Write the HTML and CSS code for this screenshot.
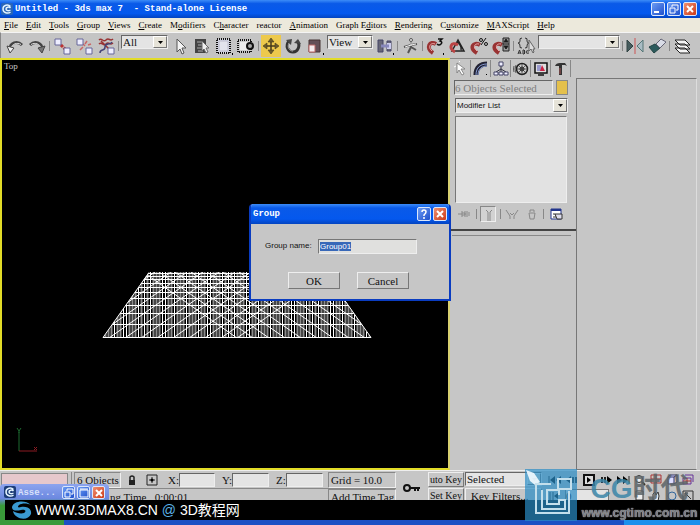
FILE: index.html
```html
<!DOCTYPE html>
<html lang="en">
<head>
<meta charset="utf-8">
<title>Untitled - 3ds max 7 - Stand-alone License</title>
<link rel="stylesheet" href="styles.css">
</head>
<body>
<header class="titlebar">
  <svg class="logo" viewBox="0 0 12 12"><rect width="12" height="12" rx="2" fill="#2a66b8"/><path d="M9.500 3.500C7 1 2 2 2 6s5 5 7.500 3M9.500 5C8 3.500 5 4 5 6s3 2 4.500 1" fill="none" stroke="#e4f4ff" stroke-width="1.500"/></svg>
  <h1>Untitled - 3ds max 7&nbsp; - Stand-alone License</h1>
  <button class="winbtn" aria-label="Minimize"><svg viewBox="0 0 12 12"><path d="M2 9h5" stroke="#fff" stroke-width="2"/></svg></button>
  <button class="winbtn" aria-label="Restore"><svg viewBox="0 0 12 12"><path d="M4 4V2h6v5H8M2 5h5v5H2z" fill="none" stroke="#fff"/></svg></button>
  <button class="winbtn close" aria-label="Close"><svg viewBox="0 0 12 12"><path d="M3 3l6 6M9 3l-6 6" stroke="#fff" stroke-width="2"/></svg></button>
</header>

<nav class="menubar">
  <a href="#"><u>F</u>ile</a><a href="#"><u>E</u>dit</a><a href="#"><u>T</u>ools</a><a href="#"><u>G</u>roup</a><a href="#"><u>V</u>iews</a><a href="#"><u>C</u>reate</a><a href="#">M<u>o</u>difiers</a><a href="#">C<u>h</u>aracter</a><a href="#">reactor</a><a href="#"><u>A</u>nimation</a><a href="#">Graph E<u>d</u>itors</a><a href="#"><u>R</u>endering</a><a href="#">C<u>u</u>stomize</a><a href="#"><u>M</u>AXScript</a><a href="#"><u>H</u>elp</a>
</nav>

<div class="toolbar">
  <button aria-label="Undo"><svg viewBox="0 0 20 20"><path d="M5 13C5 7 12 4 17 9" fill="none" stroke="#444" stroke-width="3"/><path d="M6 12C7 8 12 6 16 8.500" fill="none" stroke="#ddd"/><path d="M2 10l7 2-4 5z" fill="#eee" stroke="#444"/></svg></button>
  <button aria-label="Redo"><svg viewBox="0 0 20 20"><path d="M15 13C15 7 8 4 3 9" fill="none" stroke="#444" stroke-width="3"/><path d="M14 12C13 8 8 6 4 8.500" fill="none" stroke="#ddd"/><path d="M18 10l-7 2 4 5z" fill="#777" stroke="#444"/></svg></button>
  <i class="sep"></i>
  <button aria-label="Link"><svg viewBox="0 0 20 20"><path d="M6 6l9 9" stroke="#b33" stroke-width="3" stroke-dasharray="3 1"/><path d="M3 3h6v6H3zM12 12h6v6h-6z" fill="#eef" stroke="#669"/></svg></button>
  <button aria-label="Unlink"><svg viewBox="0 0 20 20"><path d="M9 8l2 2M13 5l-2 3M6 14l3-3M14 9l3-1" stroke="#c66" stroke-width="1.500"/><path d="M3 3h6v6H3zM12 12h6v6h-6z" fill="#eef" stroke="#669"/></svg></button>
  <button aria-label="Bind to space warp"><svg viewBox="0 0 20 20"><path d="M3 4c3-3 4 3 7 0s4 2 7-1M3 8c3-3 4 3 7 0s4 2 7-1M5 5l9 9" fill="none" stroke="#933" stroke-width="1.500"/><path d="M4 17c0-5 5-1 5-6s5-1 7-5" fill="none" stroke="#447" stroke-width="1.500"/><path d="M12 12h6v6h-6z" fill="#eef" stroke="#669"/></svg></button>
  <i class="sep"></i>
  <span class="combo filter"><select aria-label="Selection filter"><option>All</option></select></span>
  <button aria-label="Select"><svg viewBox="0 0 20 20"><path d="M7 3v13l3-3 2 5 2-1-2-5h4z" fill="#f4f4f4" stroke="#555"/></svg></button>
  <button aria-label="Select by name"><svg viewBox="0 0 20 20"><path d="M3 3h11v14H3z" fill="#444"/><path d="M5 6h6M6 9h5M5 12h6M6 15h5" stroke="#aaa"/><path d="M10 5v10l2-2 2 4 2-1-2-4h3z" fill="#eee" stroke="#666"/></svg></button>
  <button aria-label="Rectangular region"><svg viewBox="0 0 20 20"><path d="M3 3h13v14H3z" fill="#d6d8e4" stroke="#111" stroke-width="2" stroke-dasharray="1 1"/><path d="M5 5h9v10H5z" fill="#e2e3ec" stroke="#bbc"/><path d="M18 17h1v2h-1z"/></svg></button>
  <button aria-label="Window crossing"><svg viewBox="0 0 20 20"><path d="M2 4h13v12H2z" fill="#ccc" stroke="#111" stroke-width="2" stroke-dasharray="1 1"/><path d="M4 6h9v8H4z" fill="#eee"/><circle cx="14" cy="10" r="3" fill="#aaa" stroke="#111" stroke-width="2"/></svg></button>
  <i class="sep"></i>
  <button class="active" aria-label="Move"><svg viewBox="0 0 20 20"><path d="M10 4v12M4 10h12" stroke="#443a1c" stroke-width="1.500"/><path d="M10 2l3 4H7zM10 18l3-4H7zM2 10l4-3v6zM18 10l-4-3v6z" fill="#6c5c2c" stroke="#443a1c" stroke-width=".6"/></svg></button>
  <button aria-label="Rotate"><svg viewBox="0 0 20 20"><path d="M6 5C2 10 5 16 10 16s8-7 4-11" fill="none" stroke="#333" stroke-width="3"/><path d="M6 7C4 11 6 15 10 15" fill="none" stroke="#aaa"/><path d="M3 4l6-1-1 6zM11 7l4-4 3 5z" fill="#444"/></svg></button>
  <button aria-label="Scale"><svg viewBox="0 0 20 20"><path d="M4 4h11v12H4z" fill="#645058" stroke="#433"/><path d="M4 9h6v7H4z" fill="#f4ecee" stroke="#b66"/><path d="M18 17h1v2h-1z"/></svg></button>
  <span class="combo coord"><select aria-label="Reference coordinate system"><option>View</option></select></span>
  <button aria-label="Use pivot point"><svg viewBox="0 0 20 20"><path d="M3 4h5v12H3zM12 5h4v10h-4z" fill="#667" stroke="#446"/><path d="M12 7h4v6h-4z" fill="#cce"/><path d="M6 10h8" stroke="#88b" stroke-width="3"/><path d="M18 17h1v2h-1z"/></svg></button>
  <i class="sep"></i>
  <button aria-label="Manipulate"><svg viewBox="0 0 20 20"><path d="M11 5v6l-3 6M4 11l7-2 6-1M11 11l5 3" fill="none" stroke="#555" stroke-width="2"/><path d="M11 5v5M5 11l6-2 5-1" fill="none" stroke="#eee"/><circle cx="11" cy="4" r="1.500" fill="#eee" stroke="#555"/></svg></button>
  <i class="sep"></i>
  <button aria-label="Snap"><svg viewBox="0 0 20 20"><path d="M11 8C5 4 0 12 8 17" fill="none" stroke="#933" stroke-width="4"/><path d="M10 8C6 6 2 11 7 15" fill="none" stroke="#eaa"/><path d="M13 3h4l-2 2q3 1 1 3t-4 0" fill="none" stroke="#111" stroke-width="1.500"/><path d="M18 17h1v2h-1z"/></svg></button>
  <button aria-label="Angle snap"><svg viewBox="0 0 20 20"><path d="M5 15l6-11 6 11zM10 6q5 3 4 8" fill="none" stroke="#222" stroke-width="1.500"/><path d="M11 9C4 5 1 12 8 16" fill="none" stroke="#b44" stroke-width="3"/></svg></button>
  <button aria-label="Percent snap"><svg viewBox="0 0 20 20"><path d="M11 9C4 5 0 12 8 17" fill="none" stroke="#933" stroke-width="4"/><path d="M10 8C6 7 3 11 8 15" fill="none" stroke="#eaa"/><path d="M12 9l5-7" stroke="#111"/><circle cx="12" cy="4" r="1.500" fill="none" stroke="#111"/><circle cx="17" cy="8" r="1.500" fill="none" stroke="#111"/></svg></button>
  <button aria-label="Spinner snap"><svg viewBox="0 0 20 20"><path d="M11 9C4 5 0 12 8 17" fill="none" stroke="#933" stroke-width="4"/><path d="M10 8C6 7 3 11 8 15" fill="none" stroke="#eaa"/><path d="M12 2h6v13h-6z" fill="#999" stroke="#222"/><path d="M13 6l2-3 2 3zM13 10l2 3 2-3zM12 8h6" fill="#111" stroke="#222"/></svg></button>
  <i class="sep"></i>
  <button aria-label="Named selection sets"><svg viewBox="0 0 20 20"><path d="M6 2q-3 0-2 3 0 2-2 2 2 0 2 3-1 2 2 2M9 2q3 0 2 3 0 2 2 2-2 0-2 3 1 2-2 2M2 18l1.500-4L5 18M2.500 17h2M7 14v4h1q2-1 0-2 2-1 0-2zM13 15q-3-1-3 1t3 1" fill="none" stroke="#333"/><path d="M13 4v11l2-2 2 4 1-1-1-3h2z" fill="#ddd" stroke="#666"/></svg></button>
  <span class="combo sets"><select aria-label="Named selection"><option></option></select></span>
  <i class="sep"></i>
  <button aria-label="Mirror"><svg viewBox="0 0 20 20"><path d="M2 4l6 6-6 6z" fill="#465c5e" stroke="#344"/><path d="M18 4l-6 6 6 6z" fill="#a9bcc4" stroke="#577"/><path d="M10 2v16" stroke="#c55"/></svg></button>
  <button aria-label="Align"><svg viewBox="0 0 20 20"><path d="M2 11l6-3 5 4-6 5z" fill="#2c5a5c" stroke="#244"/><path d="M9 8l5-5 5 3-6 6z" fill="#d9dce6" stroke="#667"/></svg></button>
  <i class="sep"></i>
  <button aria-label="Layers"><svg viewBox="0 0 20 20"><path d="M3 12h10l5 5H8zM3 8h10l5 5H8zM3 4h10l5 5H8z" fill="#f4f4f4" stroke="#222"/></svg></button>
</div>

<main class="workspace">
  <section class="viewport">
    <span class="view-name">Top</span>
    <svg class="mesh" viewBox="0 0 270 67" id="mesh"></svg>
    <svg class="axis" viewBox="0 0 28 30"><path d="M5 6v19" stroke="#1d6b30"/><path d="M5 25h18" stroke="#8c1a22"/><path d="M3 2l2 3 2-3M5 5v2" fill="none" stroke="#1d6b30"/><path d="M20 21l3 3M23 21l-3 3" stroke="#8c1a22"/></svg>
  </section>

  <aside class="panel">
    <div class="tabs">
      <button aria-label="Create"><svg viewBox="0 0 16 16"><path d="M4 2l8 6-4 0 3 5-2 1-3-5-2 3z" fill="#fff" stroke="#777" stroke-width=".8"/><path d="M3 5l-2 1M6 1l1-1" stroke="#fff"/></svg></button>
      <button aria-label="Modify"><svg viewBox="0 0 16 16"><path d="M3 14C3 6 8 3 14 3" fill="none" stroke="#223" stroke-width="5"/><path d="M3 14C3 6 8 3 14 3M5 14C5 8 9 5 14 5" fill="none" stroke="#8aa0d8"/><path d="M13 13h1v1h-1z"/></svg></button>
      <button aria-label="Hierarchy"><svg viewBox="0 0 16 16"><path d="M8 5v3M8 8l-5 3M8 8v3M8 8l5 3" stroke="#334"/><path d="M6 1h4v4H6zM1 11h4v3H1zM6 11h4v3H6zM11 11h4v3h-4z" fill="#eef" stroke="#446"/></svg></button>
      <button aria-label="Motion"><svg viewBox="0 0 16 16"><circle cx="9" cy="8" r="5.500" fill="#ccc" stroke="#222" stroke-width="1.500"/><circle cx="9" cy="8" r="2" fill="#888" stroke="#222"/><path d="M9 3v10M4 8h10M5.500 4.500l7 7M12.500 4.500l-7 7" stroke="#333" stroke-width=".7"/><path d="M3 4q-2 4 0 8M1 5q-1 3 0 6" fill="none" stroke="#555"/></svg></button>
      <button aria-label="Display"><svg viewBox="0 0 16 16"><path d="M2 2h12v10H2z" fill="#ddd" stroke="#111" stroke-width="1.500"/><path d="M4 4h4v6H4z" fill="#99c"/><path d="M7 10l2-6 3 6z" fill="#c24"/><path d="M5 14h6" stroke="#111" stroke-width="1.500"/></svg></button>
      <button aria-label="Utilities"><svg viewBox="0 0 16 16"><path d="M2 5q1-3 5-3h5l2 3-2-1H9v10H6V5H4z" fill="#333"/><path d="M7 7v6" stroke="#a55"/></svg></button>
    </div>
    <div class="panel-cols">
      <div class="modify">
        <div class="name-row"><input class="obj-name" aria-label="Object name" value="6 Objects Selected"><button class="swatch" aria-label="Object colour"></button></div>
        <span class="combo modlist"><select aria-label="Modifier list"><option>Modifier List</option></select></span>
        <div class="stack"></div>
        <div class="stack-tools">
          <button aria-label="Pin stack"><svg viewBox="0 0 16 16"><path d="M2 8h4M6 5v6M6 7h3v2H6M9 5v6M11 5v6M13 6v4" fill="none" stroke="#888"/></svg></button>
          <i class="sep"></i>
          <button class="sunk" aria-label="Show end result"><svg viewBox="0 0 16 16"><path d="M5 3l2 2v9M11 3L9 5v9" fill="none" stroke="#888"/></svg></button>
          <i class="sep"></i>
          <button aria-label="Make unique"><svg viewBox="0 0 16 16"><path d="M2 4l4 6v3M14 4l-4 6v3M6 7l2 2 2-2" fill="none" stroke="#888"/></svg></button>
          <button aria-label="Remove modifier"><svg viewBox="0 0 16 16"><path d="M5 7h6l-1 6H6zM6 6V4h4v2" fill="none" stroke="#888"/></svg></button>
          <i class="sep"></i>
          <button aria-label="Configure"><svg viewBox="0 0 16 16"><path d="M3 3h10v10H3z" fill="#fff" stroke="#22358c"/><path d="M3 4h10" stroke="#22358c" stroke-width="2"/><path d="M7 8h7v5H9zM5 8h2M5 11h3" fill="#dde" stroke="#333"/></svg></button>
        </div>
        <div class="rollout"></div>
      </div>
      <div class="empty"></div>
    </div>
  </aside>
</main>

<footer class="status">
  <div class="listener"><div class="pink"></div><div class="white"></div></div>
  <div class="info">
    <div class="info-row">
      <span class="cell count">6 Objects</span>
      <button aria-label="Lock selection"><svg viewBox="0 0 12 12"><path d="M4 6V3q2-2 4 0v3" fill="none" stroke="#222" stroke-width="1.500"/><path d="M3 6h6v5H3z" fill="#222"/></svg></button>
      <button class="abs" aria-label="Absolute mode"><svg viewBox="0 0 12 12"><path d="M1 1h10v10H1z" fill="none" stroke="#222"/><path d="M6 3v6M3 6h6" stroke="#222"/><circle cx="6" cy="6" r="1.500"/></svg></button>
      <label>X:<input></label><label>Y:<input></label><label>Z:<input></label>
      <span class="cell grid-size">Grid = 10.0</span>
    </div>
    <div class="info-row second">
      <span class="prompt">ng Time&nbsp;&nbsp; 0:00:01</span>
      <span class="cell grid-size">Add Time Tag</span>
    </div>
  </div>
  <button class="key" aria-label="Set keys"><svg viewBox="0 0 20 12"><circle cx="5" cy="6" r="3" fill="none" stroke="#111" stroke-width="2"/><path d="M8 6h10M13 6v3M16 6v3" stroke="#111" stroke-width="2"/></svg></button>
  <div class="keys">
    <button class="txt">uto Key</button>
    <span class="combo keyset"><select aria-label="Key set"><option>Selected</option></select></span>
    <button class="txt">Set Key</button>
    <button class="txt wide">Key Filters...</button>
  </div>
  <div class="play">
    <div class="play-row">
      <button aria-label="Go to start"><svg viewBox="0 0 14 12"><path d="M1 2v8M7 2v8L2 6zM13 2v8L8 6z"/><path d="M1 2v8" stroke="#222"/></svg></button>
      <button aria-label="Previous frame"><svg viewBox="0 0 14 12"><path d="M6 2v8L1 6z"/><path d="M8 3v6M11 3v6" stroke="#222" stroke-width="2"/></svg></button>
      <button aria-label="Play"><svg viewBox="0 0 14 12"><path d="M2 1h10v10H2z" fill="#ddd" stroke="#111" stroke-width="2"/><path d="M5 3v6l4-3z"/></svg></button>
      <button aria-label="Next frame"><svg viewBox="0 0 14 12"><path d="M8 2v8l5-4z"/><path d="M3 3v6M6 3v6" stroke="#222" stroke-width="2"/></svg></button>
      <button aria-label="Go to end"><svg viewBox="0 0 14 12"><path d="M1 2v8l5-4zM7 2v8l5-4z"/><path d="M13 2v8" stroke="#222"/></svg></button>
    </div>
    <div class="play-row">
      <button aria-label="Key mode"><svg viewBox="0 0 14 12"><path d="M2 2v8M5 2v8" stroke="#222"/><path d="M6 6l4-3v6z"/></svg></button>
      <input class="frame" aria-label="Frame" value="0">
    </div>
  </div>
  <div class="nav">
    <button aria-label="Zoom"><svg viewBox="0 0 12 12"><circle cx="5" cy="5" r="3.500" fill="#eee" stroke="#333"/><path d="M8 8l3 3" stroke="#333" stroke-width="2"/></svg></button>
    <button aria-label="Zoom all"><svg viewBox="0 0 12 12"><path d="M1 1h10v8H1zM6 1v8M1 5h10" fill="none" stroke="#a33"/></svg></button>
    <button aria-label="Zoom extents"><svg viewBox="0 0 12 12"><path d="M2 3h6v7H2zM2 3l2-2h7L8 3M11 1v7l-3 2" fill="#ddf" stroke="#336"/></svg></button>
    <button aria-label="Zoom extents all"><svg viewBox="0 0 12 12"><path d="M1 4h8v6H1zM3 1h8v7" fill="none" stroke="#639"/><path d="M5 4v6M1 7h8" stroke="#a33"/></svg></button>
    <button aria-label="Region zoom"><svg viewBox="0 0 12 12"><path d="M2 1h7v9H2z" fill="#eee" stroke="#333"/></svg></button>
    <button aria-label="Pan"><svg viewBox="0 0 12 12"><path d="M3 10V4l2-2 1 3 2-3 1 4-1 5z" fill="#eee" stroke="#333"/></svg></button>
    <button aria-label="Arc rotate"><svg viewBox="0 0 12 12"><circle cx="6" cy="6" r="4" fill="none" stroke="#369"/></svg></button>
    <button aria-label="Maximize viewport"><svg viewBox="0 0 12 12"><path d="M1 1h10v10H1zM3 3l6 6M3 6V3h3" fill="none" stroke="#333"/></svg></button>
  </div>
</footer>
<div class="taskbar"><div class="start"></div><div class="task"></div><div class="tray"></div></div>

<form class="dialog">
  <div class="dialog-title"><h2>Group</h2>
    <button type="button" class="winbtn" aria-label="Help"><svg viewBox="0 0 12 12"><path d="M4 4q0-2 2-2t2 2q0 1-2 3v1M6 9v2" fill="none" stroke="#fff" stroke-width="1.500"/></svg></button>
    <button type="button" class="winbtn close" aria-label="Close"><svg viewBox="0 0 12 12"><path d="M3 3l6 6M9 3l-6 6" stroke="#fff" stroke-width="2"/></svg></button>
  </div>
  <div class="dialog-body">
    <div class="field"><label for="gname">Group name:</label><input id="gname" value="Group01"></div>
    <div class="actions"><button type="button">OK</button><button type="button">Cancel</button></div>
  </div>
</form>

<div class="mini">
  <svg class="logo" viewBox="0 0 12 12"><rect width="12" height="12" rx="2" fill="#1c3c78"/><path d="M9.500 3.500C7 1 2 2 2 6s5 5 7.500 3M9.500 5C8 3.500 5 4 5 6s3 2 4.500 1" fill="none" stroke="#e4f4ff" stroke-width="1.500"/></svg>
  <b>Asse...</b>
  <button class="winbtn" aria-label="Restore"><svg viewBox="0 0 12 12"><path d="M4 4V2h6v5H8M2 5h5v5H2z" fill="none" stroke="#fff"/></svg></button>
  <button class="winbtn" aria-label="Maximize"><svg viewBox="0 0 12 12"><path d="M2 3h8v7H2zM2 2h8" fill="none" stroke="#fff"/></svg></button>
  <button class="winbtn close" aria-label="Close"><svg viewBox="0 0 12 12"><path d="M3 3l6 6M9 3l-6 6" stroke="#fff" stroke-width="2"/></svg></button>
</div>

<div class="banner">
  <svg viewBox="0 0 22 20"><path d="M20 5C14-1 2 1 1 7c0 4 4 4 9 3 4-1 6 1 3 3-3 1-8 0-11-2 1 8 15 11 18 3 1-6-5-8-10-7-3 1-4 0-2-2 3-2 8-2 12 0z" fill="#3a9ad2"/></svg>
  <span>WWW.3DMAX8.CN <em>@</em> 3D教程网</span>
</div>

<div class="stamp">
  <svg viewBox="0 0 52 52"><path d="M0 0h52v52H0z" fill="#2a8cc4" fill-opacity=".7"/><path d="M1 1l8 3 6 9-5 3-5-4z" fill="#f4fbff" fill-opacity=".9"/><path d="M26 15H11v29h33V22M33 10h13v10H33zM34 26v-5H22v14h12v-4h6v9H17V21" fill="none" stroke="#c4dfec" stroke-width="2"/></svg>
  <div><strong><span>CG</span>时代</strong><small>www.cgtimo.com.cn</small></div>
</div>

<script>
// wireframe plane: rows get closer together towards the far edge
var rows = [65, 52, 41, 33, 26, 20, 15, 11, 7, 4, 1];
var mid = 135;
function line(x1, y1, x2, y2, c) {
  return '<path class="' + c + '" d="M' + x1 + ' ' + y1 + 'L' + x2 + ' ' + y2 + '"/>';
}
var out = '<clipPath id="plane"><path d="M47 0H223L269 66H1z"/></clipPath><g clip-path="url(#plane)">';
for (var x = 0; x < 270; x += 3) {
  out += line(x + .5, 0, x + .5, 66, x % 4 == 0 || x % 7 == 0 ? 'bright' : 'dim');
}
for (var i = 0; i < rows.length; i++) {
  out += line(0, rows[i] + .5, 270, rows[i] + .5, 'bright');
}
// slanted edges, mirrored round the middle
for (var d = 0; d < 230; d += 16) {
  out += line(mid - d + 94, 0, mid - d, 66, 'slant left');
  out += line(mid + d - 94, 0, mid + d, 66, 'slant right');
}
out += '</g><path class="bright" d="M47 .5L1 65.500H269L223 .5"/>';
document.getElementById('mesh').innerHTML = out;
document.getElementById('gname').select();
</script>
</body>
</html>
```
FILE: styles.css
```css
*{box-sizing:border-box;}
body{
margin:0;
height:100vh;
display:flex;
flex-direction:column;
overflow:hidden;
background:#c6c6c6;
color:#111;
font:11px/12px "Liberation Serif","Noto Sans CJK SC",serif;
}
button,input,select{
font:inherit;
color:inherit;
margin:0;
padding:0;
border:0;
border-radius:0;
outline:0;
background:none;
min-width:0;
}
svg{display:block;}
h1,h2{
margin:0;
flex:1;
color:#fff;
font:bold 9px/16px "Liberation Mono",monospace;
}
/* title bar */
.titlebar{
height:18px;
display:flex;
align-items:center;
gap:2px;
padding:0 3px 0 1px;
background:linear-gradient(#3c8cf8,#0a5ae8 20%,#0458ee 75%,#0344c0);
}
.logo{width:12px;height:12px;}
.winbtn{
width:14px;
height:14px;
display:grid;
place-items:center;
border:1px solid #dbe7fb;
border-radius:2px;
background:linear-gradient(135deg,#6c9cf4,#1f50cc);
}
.winbtn svg{width:12px;height:12px;}
.winbtn.close{background:linear-gradient(135deg,#f09070,#cc3a18);}
/* menus */
.menubar{
height:14px;
display:flex;
gap:8px;
padding:0 4px;
background:#ece9dc;
font-size:9px;
line-height:14px;
}
.menubar a{
color:#000;
text-decoration:none;
white-space:nowrap;
}
/* main toolbar */
.toolbar{
height:26px;
display:flex;
align-items:center;
gap:2px;
padding:0 4px;
border-left:1px solid #888;
border-top:1px solid #f4f4f4;
background:#c4c4c4;
}
.toolbar button{
width:20px;
height:22px;
display:grid;
place-items:center;
flex:none;
}
.toolbar svg{width:20px;height:20px;}
.toolbar .active{background:#edc94c;}
.sep{
width:1px;
height:10px;
background:#888;
flex:none;
}
.combo{
display:flex;
height:14px;
border:1px solid #666;
border-right-color:#eee;
border-bottom-color:#eee;
background:#e4e4e4;
}
.combo select{
flex:1;
appearance:none;
padding-left:1px;
line-height:12px;
}
.combo::after{
content:"";
width:12px;
border:1px solid #fff;
border-right-color:#777;
border-bottom-color:#777;
background:#e6e3d8 url("data:image/svg+xml,%3Csvg xmlns='http://www.w3.org/2000/svg' width='5' height='3'%3E%3Cpath d='M0 0h5L2.500 3z'/%3E%3C/svg%3E") center no-repeat;
}
.toolbar .combo{align-self:flex-start;margin-top:2px;}
.filter{width:47px;}
.coord{width:46px;}
.sets{width:82px;}
/* viewport and command panel */
.workspace{
flex:1;
min-height:0;
display:flex;
}
.viewport{
flex:1;
position:relative;
border:2px solid #e2dc28;
border-right-color:#d8d070;
background:#000;
}
.view-name{
display:block;
padding:0 2px;
color:#c8c8c8;
font-size:9px;
}
.mesh{
position:absolute;
left:100px;
top:212px;
width:270px;
height:67px;
}
.mesh path{fill:none;stroke:#fff;}
.mesh .dim{stroke:#8c8c8c;stroke-width:2;}
.axis{
position:absolute;
left:12px;
bottom:12px;
width:28px;
height:30px;
}
.panel{
width:250px;
display:flex;
flex-direction:column;
border-top:1px solid #888;
}
.tabs{
height:19px;
display:flex;
padding:1px 0 1px 1px;
}
.tabs button{
width:20px;
display:grid;
place-items:center;
border-right:1px solid #888;
}
.tabs svg{width:16px;height:16px;}
.panel-cols{
flex:1;
display:flex;
}
.modify{
width:126px;
display:flex;
flex-direction:column;
padding-top:2px;
}
.name-row{
display:flex;
gap:3px;
padding:0 8px 0 4px;
height:15px;
}
.obj-name{
flex:1;
border:1px solid #666;
border-right-color:#eee;
border-bottom-color:#eee;
color:#808080;
background:#cecece;
}
.swatch{
width:12px;
border:1px solid #888;
background:#e4c04c;
}
.modlist{
height:15px;
margin:3px 8px 3px 5px;
font:8px/12px "Liberation Sans",sans-serif;
}
.stack{
height:87px;
margin:0 9px 0 5px;
border:1px solid #777;
border-right-color:#eee;
border-bottom-color:#eee;
background:#e2e2e2;
}
.stack-tools{
display:flex;
align-items:center;
justify-content:space-between;
height:26px;
padding:0 12px 4px 6px;
}
.stack-tools button{width:16px;height:16px;}
.stack-tools svg{width:16px;height:16px;}
.stack-tools .sunk{border:1px solid #888;border-right-color:#eee;border-bottom-color:#eee;background:#d2d2d2;}
.rollout{
flex:1;
border-top:2px solid #444;
}
.rollout::before{
content:"";
display:block;
margin:4px 5px 0 2px;
border-top:1px solid #888;
}
.empty{
flex:1;
margin-right:3px;
border:1px solid #777;
border-right-color:#ddd;
}
/* status area */
.status{
height:50px;
display:flex;
padding-top:1px;
border-top:1px solid #eee;
}
.listener{
width:72px;
padding:1px 3px 0 1px;
border-right:1px solid #888;
}
.pink{height:18px;border:1px solid #888;background:#e6c8cc;}
.white{height:18px;background:#eee;}
.info{width:324px;padding-left:2px;}
.info-row{
display:flex;
align-items:center;
height:16px;
white-space:nowrap;
}
.info-row.second{
border-top:1px solid #888;
height:17px;
}
.info-row button{width:12px;height:12px;margin-left:5px;}
.info-row .abs{margin:0 4px 0 8px;}
.cell{
padding:1px 2px;
border:1px solid #888;
border-right-color:#eee;
border-bottom-color:#eee;
}
.count{width:47px;}
.grid-size{width:68px;margin-left:auto;}
.prompt{padding-left:36px;}
.info-row label{
display:flex;
align-items:center;
padding-left:6px;
width:54px;
}
.info-row input{
flex:1;
margin-right:1px;
height:14px;
border:1px solid #666;
border-right-color:#eee;
border-bottom-color:#eee;
background:#e4e4e4;
}
.key{width:32px;padding:10px 6px;}
.key svg{width:20px;height:12px;}
.status .key{align-self:flex-start;}
.keys{
width:114px;
display:grid;
grid-template-columns:36px 1fr;
grid-auto-rows:15px;
gap:1px;
align-content:start;
}
.txt{
white-space:nowrap;
font-size:10px;
border:1px solid #eee;
border-right-color:#777;
border-bottom-color:#777;
}
.wide{
padding-left:5px;
font-size:11px;
text-align:left;
}
.play{
flex:1;
padding-left:6px;
}
.play-row{display:flex;gap:3px;height:16px;align-items:center;}
.play-row button,.play-row svg{width:14px;height:12px;}
.frame{width:44px;height:14px;border:1px solid #777;background:#e4e4e4;}
.nav{
width:66px;
display:grid;
grid-template-columns:repeat(4,16px);
grid-auto-rows:16px;
align-content:start;
align-items:center;
}
.nav svg{width:12px;height:12px;}
.taskbar{
height:5px;
display:flex;
background:#2058d0;
}
.start{width:64px;background:#3a9a3a;}
.task{flex:1;background:#1c50c4;}
.tray{width:76px;background:#1c90ec;}
/* group dialog */
.dialog{
position:absolute;
left:249px;
top:204px;
width:202px;
border:2px solid #0a3cc0;
border-top:0;
border-radius:4px 4px 0 0;
overflow:hidden;
background:#c6c6c6;
}
.dialog-title{
display:flex;
align-items:center;
gap:2px;
height:20px;
padding:0 2px;
background:linear-gradient(#3c8cf8,#0a5ae8 20%,#0458ee 75%,#0344c0);
}
.dialog-body{padding:15px 14px 10px;}
.field{
display:flex;
gap:6px;
font:8px/14px "Liberation Sans",sans-serif;
}
.field label{width:47px;white-space:nowrap;}
.field input{
width:99px;
height:15px;
padding-left:1px;
border:1px solid #777;
border-right-color:#eee;
border-bottom-color:#eee;
background:#e0e0de;
}
.field input::selection{background:#3868b8;color:#fff;}
.actions{
display:flex;
gap:17px;
padding:18px 0 0 23px;
}
.actions button{
width:52px;
height:17px;
border:1px solid #eee;
border-right-color:#777;
border-bottom-color:#777;
}
/* floating window and site marks */
.mini{
position:absolute;
left:0;
bottom:5px;
width:109px;
height:36px;
display:flex;
align-items:flex-start;
gap:2px;
padding:2px 4px;
border-radius:4px 4px 0 0;
background:linear-gradient(#8ca4ee,#6c88e0 40%,#3a9a3a 60%);
}
.mini b{
flex:1;
color:#d8e0fa;
font:bold 9px/14px "Liberation Mono",monospace;
}
.mini .winbtn{width:13px;height:13px;}
.banner{
position:absolute;
left:5px;
right:0;
bottom:5px;
height:20px;
display:flex;
align-items:center;
gap:2px;
padding-left:6px;
background:#000;
color:#fff;
font:14px/20px "Liberation Sans","Noto Sans CJK SC",sans-serif;
}
.banner svg{width:22px;height:20px;}
.banner em{font-style:normal;color:#5cb4e8;}
.stamp{
position:absolute;
right:2px;
bottom:4px;
width:173px;
display:flex;
gap:4px;
}
.stamp svg{width:52px;height:52px;}
.stamp div{
flex:1;
display:flex;
flex-direction:column;
align-items:center;
justify-content:flex-end;
}
.stamp strong{
color:#5c6468;
font:bold 28px/32px "Liberation Sans","Noto Sans CJK SC",sans-serif;
opacity:.85;
}
.stamp strong span{color:#3c86a8;}
.stamp small{
color:#777c80;
font:bold 12px/16px "Liberation Sans",sans-serif;
text-shadow:0 0 1px #fff;
}
```
